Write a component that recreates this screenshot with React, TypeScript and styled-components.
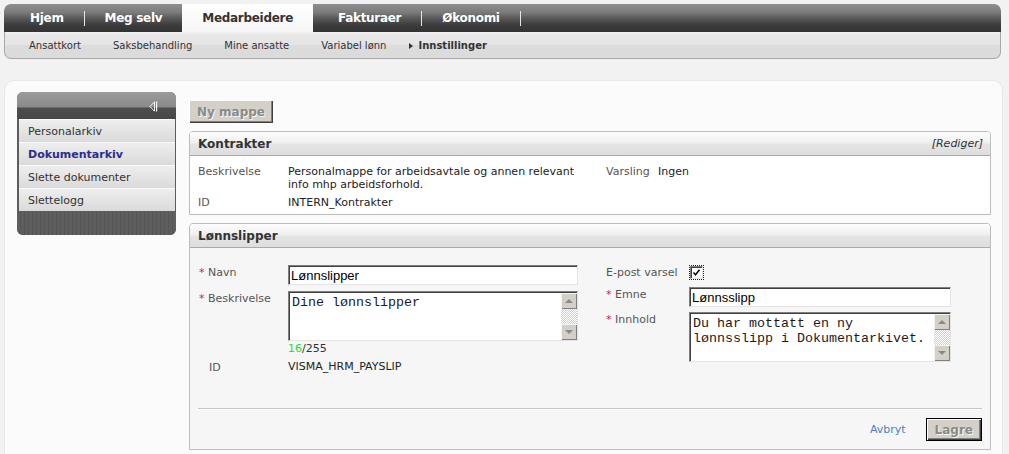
import React from "react";
import styled, { createGlobalStyle } from "styled-components";

const GlobalStyle = createGlobalStyle`
  html, body { margin: 0; padding: 0; }
  body {
    background: #f2f2f2;
    font-family: "DejaVu Sans", Verdana, sans-serif;
    font-size: 11px;
    color: #333;
  }
  * { box-sizing: border-box; }
`;

const Page = styled.div`
  padding: 4px 0 0 4px;
  width: 1009px;
`;

/* ---------- top navigation ---------- */
const TopNav = styled.nav`
  width: 997px;
`;

const TabBar = styled.div`
  height: 28px;
  display: flex;
  align-items: stretch;
  padding-left: 6px;
  border-radius: 7px 7px 0 0;
  background: linear-gradient(#8f8f8f 0%, #7b7b7b 30%, #5a5a5a 50%, #3c3c3c 75%, #323232 100%);
`;

const Tab = styled.a<{ $active?: boolean }>`
  display: flex;
  align-items: center;
  padding: 0 20px;
  margin-right: ${(p) => (p.$active ? "5px" : "0")};
  font-size: 12px;
  font-weight: bold;
  letter-spacing: -0.3px;
  text-decoration: none;
  color: ${(p) => (p.$active ? "#333" : "#fff")};
  background: ${(p) => (p.$active ? "linear-gradient(#ffffff, #f6f6f6)" : "transparent")};
`;

const TabSep = styled.span`
  width: 1px;
  height: 15px;
  align-self: center;
  background: #e6e6e6;
`;

const SubBar = styled.div`
  height: 27px;
  display: flex;
  align-items: center;
  gap: 32px;
  padding-left: 24px;
  border: 1px solid #a9a9a9;
  border-top: none;
  border-radius: 0 0 7px 7px;
  background: linear-gradient(#f2f2f2 0, #e7e7e7 3px, #e5e5e5 48%, #dcdcdc 52%, #dbdbdb 100%);
`;

const SubItem = styled.a<{ $active?: boolean }>`
  position: relative;
  font-size: 10px;
  color: #333;
  text-decoration: none;
  font-weight: ${(p) => (p.$active ? "bold" : "normal")};
  &::before {
    content: ${(p) => (p.$active ? "''" : "none")};
    position: absolute;
    left: -9px;
    top: 3px;
    border-left: 4px solid #333;
    border-top: 3px solid transparent;
    border-bottom: 3px solid transparent;
  }
`;

/* ---------- main panel ---------- */
const MainPanel = styled.main`
  margin-top: 21px;
  width: 999px;
  min-height: 420px;
  padding: 11px 11px 0 12px;
  display: flex;
  gap: 13px;
  align-items: flex-start;
  background: #fbfbfb;
  border: 1px solid #e8e8e8;
  border-radius: 10px;
`;

/* ---------- sidebar ---------- */
const Sidebar = styled.aside`
  width: 159px;
  flex: none;
  border-radius: 6px;
  overflow: hidden;
  background: #5c5c5c;
`;

const SideHead = styled.div`
  height: 27px;
  display: flex;
  align-items: center;
  justify-content: flex-end;
  padding: 2px 18px 0 0;
  background: linear-gradient(#9c9c9c 0%, #8a8a8a 55%, #4d4d4d 60%, #474747 100%);
`;

const SideList = styled.ul`
  list-style: none;
  margin: 0;
  padding: 0 1px 0 2px;
`;

const SideItem = styled.li<{ $active?: boolean }>`
  height: 23px;
  display: flex;
  align-items: center;
  padding-left: 9px;
  font-size: 11px;
  font-weight: ${(p) => (p.$active ? "bold" : "normal")};
  color: ${(p) => (p.$active ? "#2c2c8e" : "#333")};
  border-top: 1px solid #fafafa;
  background: linear-gradient(#eeeeee, #dadada);
`;

const SideFoot = styled.div`
  height: 24px;
  background: repeating-linear-gradient(90deg, #5e5e5e 0 3px, #565656 3px 4px);
`;

/* ---------- content ---------- */
const Content = styled.div`
  width: 802px;
  flex: none;
  padding-top: 8px;
`;

const Button = styled.button<{ $default?: boolean }>`
  height: 23px;
  padding: 0 8px;
  font-family: "DejaVu Sans", Verdana, sans-serif;
  font-size: 12px;
  font-weight: bold;
  color: #8a8a8a;
  text-shadow: 1px 1px 0 #f4f4f4;
  background: #d4d0c8;
  border: ${(p) => (p.$default ? "1px solid #000" : "none")};
  box-shadow: inset 1px 1px #ffffff, inset -1px -1px #404040, inset -2px -2px #808080;
  cursor: default;
`;

const Box = styled.section<{ $grey?: boolean }>`
  margin-top: 8px;
  border: 1px solid #bdbdbd;
  border-radius: 4px 4px 0 0;
  background: ${(p) => (p.$grey ? "#f6f6f6" : "#ffffff")};
  overflow: hidden;
`;

const BoxHead = styled.header`
  height: 24px;
  display: flex;
  align-items: center;
  justify-content: space-between;
  padding: 0 7px 0 8px;
  border-bottom: 1px solid #a9a9a9;
  background: linear-gradient(#fdfdfd 0%, #f0f0f0 45%, #e4e4e4 55%, #dedede 100%);
`;

const BoxTitle = styled.h2`
  margin: 0;
  font-size: 12px;
  font-weight: bold;
  color: #333;
`;

const EditLink = styled.a`
  font-size: 11px;
  font-style: italic;
  color: #333;
  text-decoration: none;
`;

const InfoGrid = styled.div`
  display: grid;
  grid-template-columns: 90px 318px 52px 1fr;
  row-gap: 5px;
  padding: 9px 8px 5px 8px;
  line-height: 13px;
`;

const Label = styled.span`
  font-size: 11px;
  color: #555;
`;

const Value = styled.span`
  font-size: 11px;
  color: #222;
`;

const Form = styled.div`
  display: flex;
  gap: 28px;
  padding: 17px 9px 34px 9px;
`;

const Column = styled.div`
  display: flex;
  flex-direction: column;
`;

const FormRow = styled.div<{ $labelW: number; $mt?: number }>`
  display: grid;
  grid-template-columns: ${(p) => p.$labelW}px auto;
  align-items: start;
  margin-top: ${(p) => p.$mt ?? 0}px;
`;

const FieldLabel = styled.label<{ $indent?: boolean }>`
  font-size: 11px;
  line-height: 13px;
  padding-top: 1px;
  padding-left: ${(p) => (p.$indent ? "10px" : "0")};
  color: #555;
`;

const Req = styled.span`
  color: #c8206a;
`;

const TextInput = styled.input<{ $w: number }>`
  width: ${(p) => p.$w}px;
  height: 20px;
  padding: 0 2px;
  font-family: "Liberation Sans", Arial, sans-serif;
  font-size: 13px;
  color: #000;
  background: #fff;
  border: 1px solid;
  border-color: #7f7f7f #e4e4e4 #e4e4e4 #7f7f7f;
  box-shadow: inset 1px 1px #404040;
  outline: none;
`;

const AreaWrap = styled.div<{ $w: number }>`
  width: ${(p) => p.$w}px;
  height: 50px;
  display: flex;
  background: #fff;
  border: 1px solid;
  border-color: #7f7f7f #e4e4e4 #e4e4e4 #7f7f7f;
  box-shadow: inset 1px 1px #404040;
  padding: 1px 0 0 1px;
`;

const Area = styled.textarea`
  flex: 1;
  min-width: 0;
  height: 100%;
  resize: none;
  overflow: hidden;
  border: none;
  outline: none;
  background: transparent;
  padding: 2px 2px 0 2px;
  font-family: "Liberation Mono", "Courier New", monospace;
  font-size: 13.33px;
  line-height: 15px;
  color: #1a1a1a;
`;

const ScrollBar = styled.div`
  width: 16px;
  flex: none;
  display: flex;
  flex-direction: column;
`;

const ScrollBtn = styled.div<{ $down?: boolean }>`
  height: 16px;
  display: flex;
  align-items: center;
  justify-content: center;
  background: #d4d0c8;
  box-shadow: inset 1px 1px #f4f4f4, inset -1px -1px #808080;
  &::after {
    content: "";
    border-left: 4px solid transparent;
    border-right: 4px solid transparent;
    ${(p) => (p.$down ? "border-top: 4px solid #8a8a8a;" : "border-bottom: 4px solid #8a8a8a;")}
  }
`;

const ScrollTrack = styled.div`
  flex: 1;
  background: repeating-conic-gradient(#d4d0c8 0 25%, #ffffff 0 50%) 0 0 / 2px 2px;
`;

const Counter = styled.div`
  margin-top: 1px;
  font-size: 11px;
  line-height: 13px;
  color: #333;
`;

const CountNum = styled.span`
  color: #2fd92f;
`;

const Check = styled.span`
  margin: 1px 0 0 1px;
  width: 13px;
  height: 13px;
  display: flex;
  align-items: center;
  justify-content: center;
  background: #fff;
  border: 1px solid;
  border-color: #808080 #e4e4e4 #e4e4e4 #808080;
  box-shadow: inset 1px 1px #404040;
  outline: 1px dotted #222;
`;

const Divider = styled.hr`
  margin: 0 8px;
  border: none;
  border-top: 1px solid #c6c6c6;
  border-bottom: 1px solid #ffffff;
`;

const FormFoot = styled.div`
  display: flex;
  align-items: center;
  justify-content: flex-end;
  gap: 20px;
  padding: 8px 8px 8px 0;
`;

const CancelLink = styled.a`
  font-size: 11px;
  color: #4a7fc8;
  text-decoration: none;
`;

const CollapseIcon = () => (
  <svg width="9" height="11" viewBox="0 0 9 11">
    <path d="M5.5 0.8 L0.9 5.5 L5.5 10.2 Z" fill="none" stroke="#f2f2f2" strokeWidth="1" />
    <rect x="7" y="0.5" width="1.2" height="10" fill="#f2f2f2" />
  </svg>
);

const CheckMark = () => (
  <svg width="9" height="9" viewBox="0 0 9 9">
    <polyline points="1.5,4.5 3.5,6.8 7.5,1.8" fill="none" stroke="#000" strokeWidth="1.4" />
  </svg>
);

const TextArea = ({ w, value }: { w: number; value: string }) => (
  <AreaWrap $w={w}>
    <Area defaultValue={value} />
    <ScrollBar>
      <ScrollBtn />
      <ScrollTrack />
      <ScrollBtn $down />
    </ScrollBar>
  </AreaWrap>
);

export default function App() {
  return (
    <>
      <GlobalStyle />
      <Page>
        <TopNav>
          <TabBar>
            <Tab>Hjem</Tab>
            <TabSep />
            <Tab>Meg selv</Tab>
            <Tab $active>Medarbeidere</Tab>
            <Tab>Fakturaer</Tab>
            <TabSep />
            <Tab>Økonomi</Tab>
            <TabSep />
          </TabBar>
          <SubBar>
            <SubItem>Ansattkort</SubItem>
            <SubItem>Saksbehandling</SubItem>
            <SubItem>Mine ansatte</SubItem>
            <SubItem>Variabel lønn</SubItem>
            <SubItem $active>Innstillinger</SubItem>
          </SubBar>
        </TopNav>

        <MainPanel>
          <Sidebar>
            <SideHead>
              <CollapseIcon />
            </SideHead>
            <SideList>
              <SideItem>Personalarkiv</SideItem>
              <SideItem $active>Dokumentarkiv</SideItem>
              <SideItem>Slette dokumenter</SideItem>
              <SideItem>Slettelogg</SideItem>
            </SideList>
            <SideFoot />
          </Sidebar>

          <Content>
            <Button>Ny mappe</Button>

            <Box>
              <BoxHead>
                <BoxTitle>Kontrakter</BoxTitle>
                <EditLink>[Rediger]</EditLink>
              </BoxHead>
              <InfoGrid>
                <Label>Beskrivelse</Label>
                <Value>
                  Personalmappe for arbeidsavtale og annen relevant
                  <br />
                  info mhp arbeidsforhold.
                </Value>
                <Label>Varsling</Label>
                <Value>Ingen</Value>
                <Label>ID</Label>
                <Value>INTERN_Kontrakter</Value>
              </InfoGrid>
            </Box>

            <Box $grey>
              <BoxHead>
                <BoxTitle>Lønnslipper</BoxTitle>
              </BoxHead>
              <Form>
                <Column>
                  <FormRow $labelW={89}>
                    <FieldLabel>
                      <Req>*</Req> Navn
                    </FieldLabel>
                    <TextInput $w={290} defaultValue="Lønnslipper" />
                  </FormRow>
                  <FormRow $labelW={89} $mt={6}>
                    <FieldLabel>
                      <Req>*</Req> Beskrivelse
                    </FieldLabel>
                    <div>
                      <TextArea w={290} value="Dine lønnslipper" />
                      <Counter>
                        <CountNum>16</CountNum>/255
                      </Counter>
                    </div>
                  </FormRow>
                  <FormRow $labelW={89} $mt={5}>
                    <FieldLabel $indent>ID</FieldLabel>
                    <Value>VISMA_HRM_PAYSLIP</Value>
                  </FormRow>
                </Column>
                <Column>
                  <FormRow $labelW={83}>
                    <FieldLabel>E-post varsel</FieldLabel>
                    <Check>
                      <CheckMark />
                    </Check>
                  </FormRow>
                  <FormRow $labelW={83} $mt={8}>
                    <FieldLabel>
                      <Req>*</Req> Emne
                    </FieldLabel>
                    <TextInput $w={262} defaultValue="Lønnsslipp" />
                  </FormRow>
                  <FormRow $labelW={83} $mt={5}>
                    <FieldLabel>
                      <Req>*</Req> Innhold
                    </FieldLabel>
                    <TextArea w={262} value={"Du har mottatt en ny\nlønnsslipp i Dokumentarkivet."} />
                  </FormRow>
                </Column>
              </Form>
              <Divider />
              <FormFoot>
                <CancelLink>Avbryt</CancelLink>
                <Button $default>Lagre</Button>
              </FormFoot>
            </Box>
          </Content>
        </MainPanel>
      </Page>
    </>
  );
}
